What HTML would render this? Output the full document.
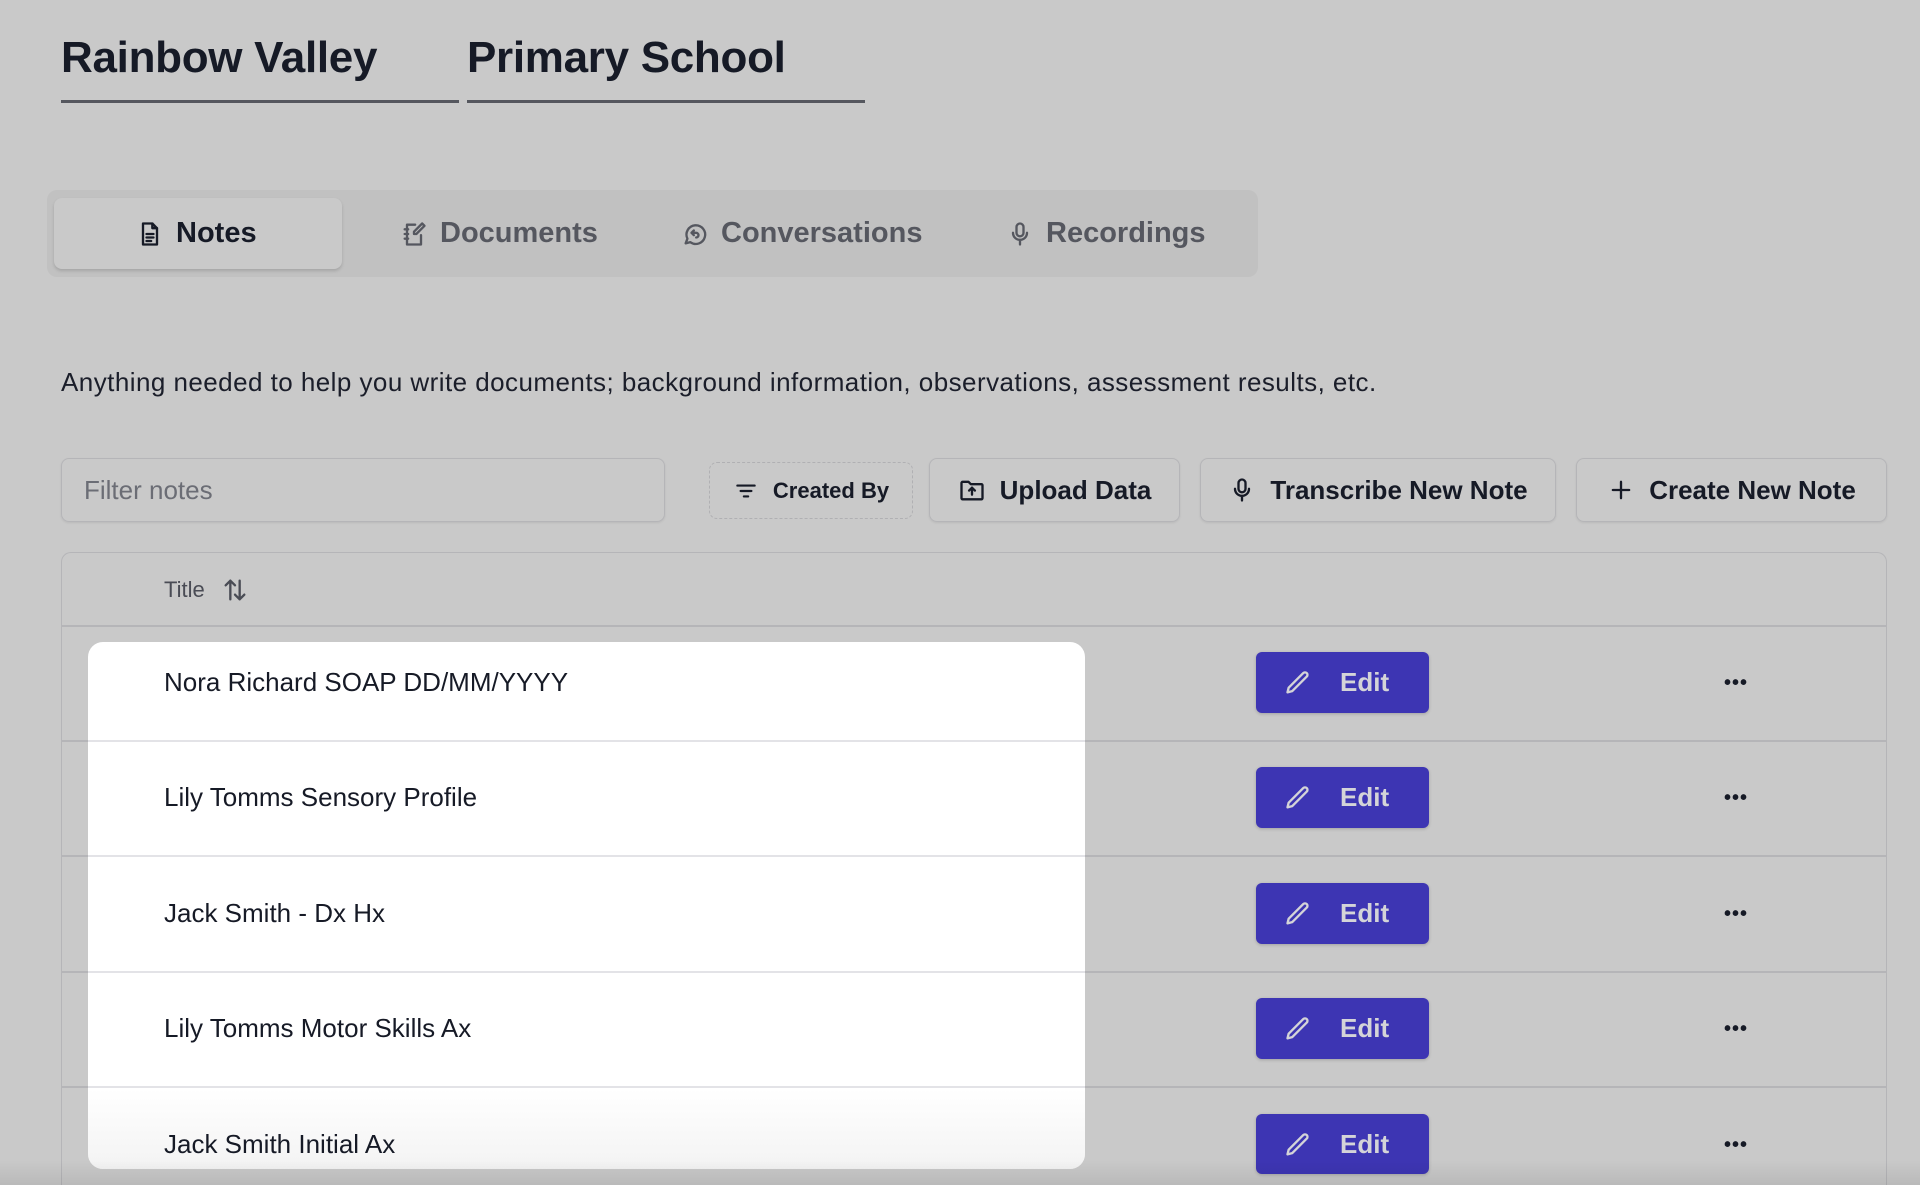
<!DOCTYPE html>
<html><head><meta charset="utf-8"><style>
*{box-sizing:border-box;margin:0;padding:0}
html,body{width:1920px;height:1185px;overflow:hidden}
body{background:#c9c9c9;font-family:"Liberation Sans",sans-serif;color:#161a26;position:relative}
.abs{position:absolute}
h1{position:absolute;font-size:44px;font-weight:600;top:33px;letter-spacing:-0.3px}
.ul{position:absolute;top:100px;height:3px;background:#55575e}
.tabs{left:47px;top:190px;width:1211px;height:87px;background:#c1c1c1;border-radius:10px}
.act{left:54px;top:198px;width:288px;height:71px;background:#c9c9c9;border-radius:8px;box-shadow:0 2px 3px rgba(0,0,0,.15)}
.tab{position:absolute;top:217px;font-size:29px;font-weight:600;color:#55575f;display:flex;align-items:center;gap:12px}
.tab svg{width:28px;height:28px;fill:none;stroke:currentColor;stroke-width:2;stroke-linecap:round;stroke-linejoin:round}
.desc{left:61px;top:367px;font-size:26px;letter-spacing:0.45px;color:#1b1e2a}
.btn{position:absolute;top:458px;height:64px;border:1.5px solid #b5b5b8;border-radius:8px;display:flex;align-items:center;justify-content:center;gap:14px;font-size:26px;font-weight:600;color:#161a26;box-shadow:0 1px 2px rgba(0,0,0,.08)}
.btn svg{width:28px;height:28px;fill:none;stroke:currentColor;stroke-width:2;stroke-linecap:round;stroke-linejoin:round}
.table{left:61px;top:552px;width:1826px;height:633px;border:1.5px solid #b5b5b8;border-bottom:none;border-radius:10px 10px 0 0}
.line{position:absolute;left:62px;width:1824px;height:1.5px;background:#b5b5b8}
.white{left:88px;top:642px;width:997px;height:527px;background:#fff;border-radius:15px;overflow:hidden}
.wl{position:absolute;left:0;width:100%;height:1.5px;background:#e3e3e7}
.rt{position:absolute;left:164px;font-size:26px;font-weight:500;color:#161a26}
.edit{position:absolute;left:1256px;width:173px;height:61px;background:#3d35b3;border-radius:6px;color:#d4d4d8;font-size:26px;font-weight:600;display:flex;align-items:center;box-shadow:0 1px 3px rgba(0,0,0,.2)}
.edit svg{position:absolute;left:28px;top:17px;width:28px;height:28px;fill:none;stroke:#d4d4d8;stroke-width:2;stroke-linecap:round;stroke-linejoin:round}
.edit span{position:absolute;left:84px}
.dots{position:absolute;left:1724px;font-size:20px;font-weight:700;letter-spacing:1px}
</style></head><body>
<h1 style="left:61px">Rainbow Valley</h1>
<h1 style="left:467px">Primary School</h1>
<div class="ul" style="left:61px;width:398px"></div>
<div class="ul" style="left:467px;width:398px"></div>

<div class="abs tabs"></div>
<div class="abs act"></div>
<div class="tab" style="left:136px;color:#161a26"><svg viewBox="0 0 24 24"><path d="M14 3H6v18h12V7z"/><path d="M14 3v4h4M9 12h6M9 15h6M9 18h4"/></svg>Notes</div>
<div class="tab" style="left:400px"><svg viewBox="0 0 24 24"><path d="M13 4H6v17h12v-8"/><path d="M4 8h3M4 12h3M4 16h3"/><path d="M19 3l2 2-7 7h-2v-2z"/></svg>Documents</div>
<div class="tab" style="left:681px"><svg viewBox="0 0 24 24"><path d="M4 20l1.5-4A8 8 0 1 1 8 19z"/><path d="M11 9l-2 2 2 2M9 11h4a2 2 0 0 1 0 4"/></svg>Conversations</div>
<div class="tab" style="left:1006px"><svg viewBox="0 0 24 24"><rect x="9" y="3" width="6" height="11" rx="3"/><path d="M6 11a6 6 0 0 0 12 0M12 17v4"/></svg>Recordings</div>

<div class="abs desc">Anything needed to help you write documents; background information, observations, assessment results, etc.</div>

<div class="btn" style="left:61px;width:604px;justify-content:flex-start;padding-left:22px;font-weight:400;color:#6b6d75">Filter notes</div>
<div class="btn" style="left:709px;top:462px;height:57px;width:204px;border:1.5px dashed #b0b0b3;font-size:22px;box-shadow:none"><svg viewBox="0 0 24 24" style="width:26px"><path d="M4 7h16M7 12h10M10 17h4"/></svg>Created By</div>
<div class="btn" style="left:929px;width:251px"><svg viewBox="0 0 24 24"><path d="M3 6a1 1 0 0 1 1-1h5l2 2h9a1 1 0 0 1 1 1v11a1 1 0 0 1-1 1H4a1 1 0 0 1-1-1z"/><path d="M12 16v-6M9.5 12.5L12 10l2.5 2.5"/></svg>Upload Data</div>
<div class="btn" style="left:1200px;width:356px"><svg viewBox="0 0 24 24"><rect x="9" y="3" width="6" height="11" rx="3"/><path d="M6 11a6 6 0 0 0 12 0M12 17v4"/></svg>Transcribe New Note</div>
<div class="btn" style="left:1576px;width:311px"><svg viewBox="0 0 24 24"><path d="M12 5v14M5 12h14"/></svg>Create New Note</div>

<div class="abs table"></div>
<div class="abs" style="left:164px;top:576px;font-size:22px;font-weight:500;color:#4a4c55;display:flex;align-items:center;gap:16px">Title <svg viewBox="0 0 24 24" width="28" height="28" fill="none" stroke="#4a4c55" stroke-width="2" stroke-linecap="round" stroke-linejoin="round"><path d="M8 20V4M4 8l4-4 4 4M16 4v16M12 16l4 4 4-4"/></svg></div>
<div class="line" style="top:625px"></div>
<div class="line" style="top:740px"></div>
<div class="line" style="top:855px"></div>
<div class="line" style="top:971px"></div>
<div class="line" style="top:1086px"></div>

<div class="abs white">
<div class="wl" style="top:98px"></div>
<div class="wl" style="top:213px"></div>
<div class="wl" style="top:329px"></div>
<div class="wl" style="top:444px"></div>
<div style="position:absolute;left:0;bottom:0;width:100%;height:80px;background:linear-gradient(rgba(240,240,240,0),rgba(235,235,235,.6))"></div>
</div>
<div class="rt" style="top:667px">Nora Richard SOAP DD/MM/YYYY</div>
<div class="rt" style="top:782px">Lily Tomms Sensory Profile</div>
<div class="rt" style="top:898px">Jack Smith - Dx Hx</div>
<div class="rt" style="top:1013px">Lily Tomms Motor Skills Ax</div>
<div class="rt" style="top:1129px">Jack Smith Initial Ax</div>

<div class="edit" style="top:652px"><svg viewBox="0 0 24 24"><path d="M16.5 3.5a2.1 2.1 0 0 1 3 3L7 19l-4 1 1-4z"/></svg><span>Edit</span></div>
<div class="edit" style="top:767px"><svg viewBox="0 0 24 24"><path d="M16.5 3.5a2.1 2.1 0 0 1 3 3L7 19l-4 1 1-4z"/></svg><span>Edit</span></div>
<div class="edit" style="top:883px"><svg viewBox="0 0 24 24"><path d="M16.5 3.5a2.1 2.1 0 0 1 3 3L7 19l-4 1 1-4z"/></svg><span>Edit</span></div>
<div class="edit" style="top:998px"><svg viewBox="0 0 24 24"><path d="M16.5 3.5a2.1 2.1 0 0 1 3 3L7 19l-4 1 1-4z"/></svg><span>Edit</span></div>
<div class="edit" style="top:1114px;height:60px"><svg viewBox="0 0 24 24"><path d="M16.5 3.5a2.1 2.1 0 0 1 3 3L7 19l-4 1 1-4z"/></svg><span>Edit</span></div>

<div class="dots" style="top:672px">•••</div>
<div class="dots" style="top:787px">•••</div>
<div class="dots" style="top:903px">•••</div>
<div class="dots" style="top:1018px">•••</div>
<div class="dots" style="top:1134px">•••</div>
<div class="abs" style="left:0;top:1160px;width:1920px;height:25px;background:linear-gradient(rgba(0,0,0,0),rgba(0,0,0,.08))"></div>
</body></html>
